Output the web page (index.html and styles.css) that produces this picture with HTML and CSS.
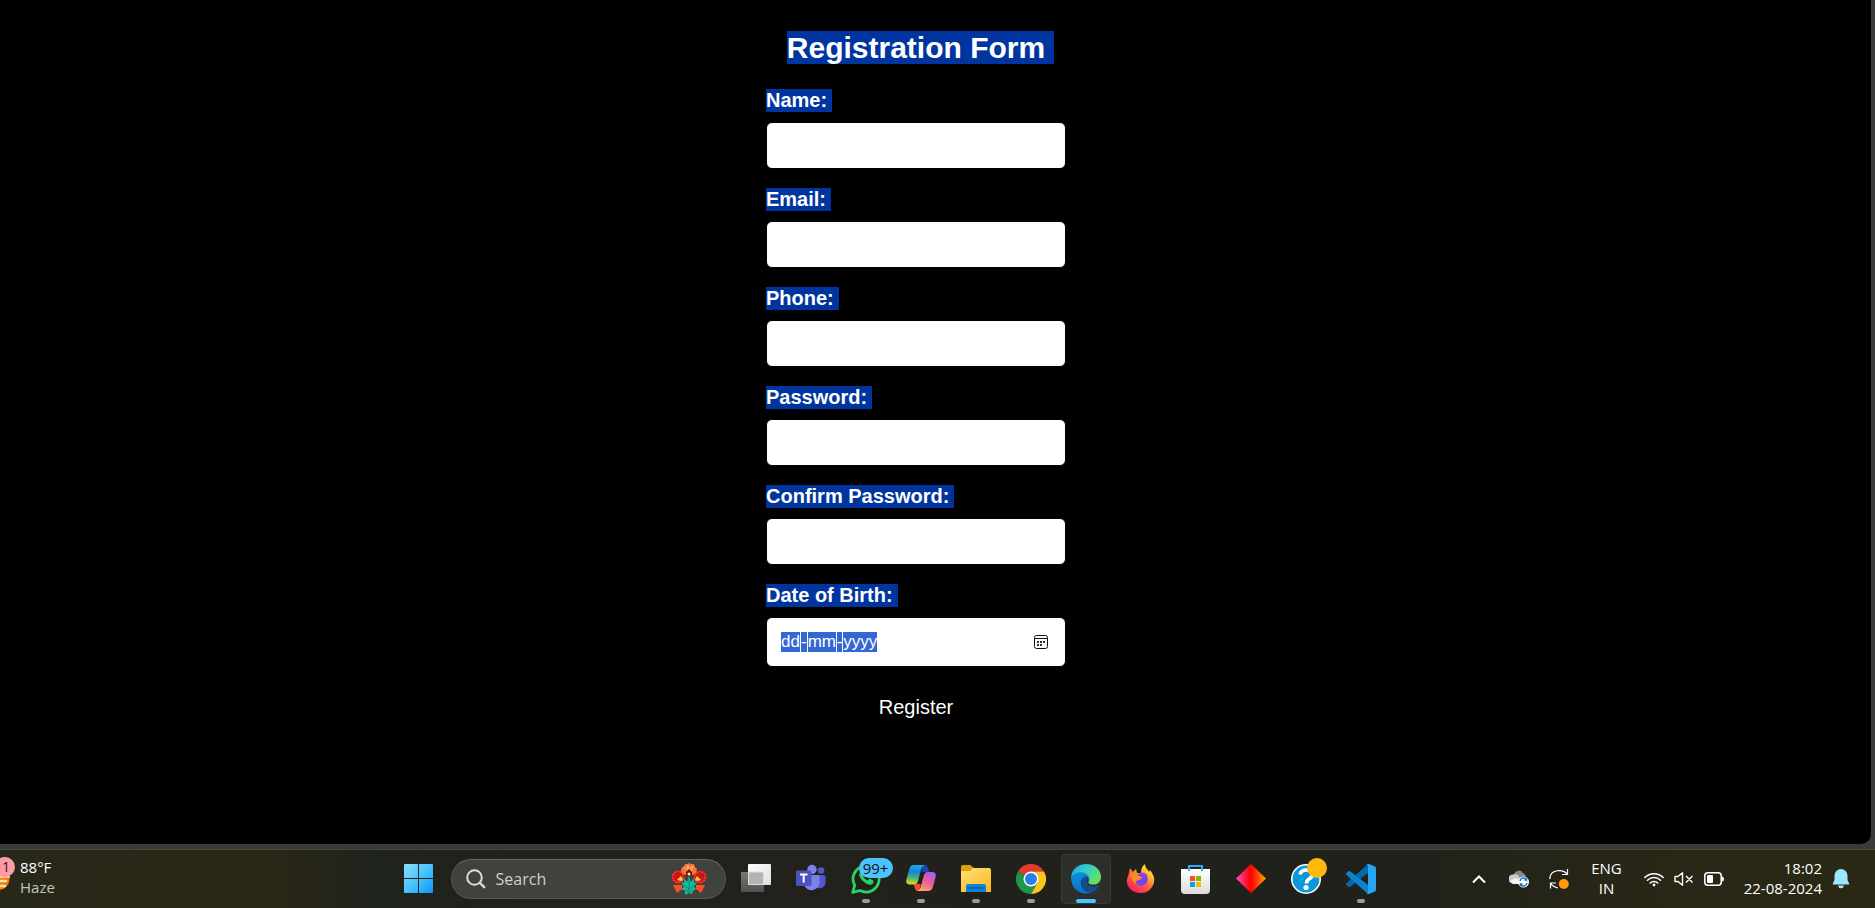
FILE: index.html
```html
<!DOCTYPE html>
<html lang="en">
<head>
<meta charset="utf-8">
<title>Registration Form</title>
<link rel="stylesheet" href="styles.css">
</head>
<body>
<div class="browser">
  <main class="page">
    <form class="form">
      <h1 class="title"><span class="marked">Registration Form</span></h1>
      <div class="field"><label class="label" for="name"><span class="marked">Name:</span></label><input class="box" id="name" type="text"></div>
      <div class="field"><label class="label" for="email"><span class="marked">Email:</span></label><input class="box" id="email" type="email"></div>
      <div class="field"><label class="label" for="phone"><span class="marked">Phone:</span></label><input class="box" id="phone" type="tel"></div>
      <div class="field"><label class="label" for="password"><span class="marked">Password:</span></label><input class="box" id="password" type="password"></div>
      <div class="field"><label class="label" for="confirm"><span class="marked">Confirm Password:</span></label><input class="box" id="confirm" type="password"></div>
      <div class="field">
        <label class="label" for="day"><span class="marked">Date of Birth:</span></label>
        <div class="box date">
          <input class="part day" id="day" type="text" value="dd" aria-label="Day"><span class="dash">-</span><input class="part month" type="text" value="mm" aria-label="Month"><span class="dash">-</span><input class="part year" type="text" value="yyyy" aria-label="Year">
          <button class="picker" type="button" aria-label="Show calendar">
            <svg width="14" height="14" viewBox="0 0 14 14"><rect x=".5" y=".5" width="13" height="13" rx="2" fill="none" stroke="#111"/><path d="M1 3.5h12" stroke="#111"/><path d="M3 6h2v2H3zM6 6h2v2H6zM9 6h2v2H9zM3 9h2v2H3zM6 9h2v2H6z" fill="#333"/></svg>
          </button>
        </div>
      </div>
      <button class="register" type="button">Register</button>
    </form>
  </main>
</div>

<footer class="taskbar">
  <button class="weather" type="button">
    <svg class="weather-icon" width="15" height="36" viewBox="0 0 15 36"><path d="M0 19h9a11 11 0 0 1-9 14z" fill="#f57c0b"/><path d="M0 24h6M0 29h5" stroke="#fbe3a6" stroke-width="2.6" stroke-linecap="round"/><path d="M0 20h10" stroke="#fff0c8" stroke-width="1.4"/><circle cx="5" cy="10" r="10" fill="#ff9ba6"/><text x="2" y="15" class="badge-one">1</text></svg>
    <span class="weather-text"><span>88°F</span><span class="muted">Haze</span></span>
  </button>

  <nav class="apps" aria-label="Taskbar">
    <button class="app start" type="button" aria-label="Start">
      <svg width="30" height="30" viewBox="0 0 30 30"><defs><linearGradient id="win" x1="0" y1="0" x2="30" y2="30" gradientUnits="userSpaceOnUse"><stop stop-color="#8be0ff"/><stop offset=".5" stop-color="#45c2fd"/><stop offset="1" stop-color="#0793fb"/></linearGradient></defs><path d="M1 0h13v14H0V1a1 1 0 0 1 1-1zM15 0h13a1 1 0 0 1 1 1v13H15zM0 15h14v14H1a1 1 0 0 1-1-1zM15 15h14v13a1 1 0 0 1-1 1H15z" fill="url(#win)"/></svg>
    </button>
    <label class="search">
      <svg width="20" height="20" viewBox="0 0 20 20" fill="none" stroke="#dededa" stroke-linecap="round"><circle cx="8.5" cy="8.5" r="7.3" stroke-width="2"/><path d="M14 14l4.2 4.2" stroke-width="2.4"/></svg>
      <input class="search-input" type="text" placeholder="Search" aria-label="Search">
      <svg width="36" height="32" viewBox="0 0 36 32"><g fill="#c9151c"><circle cx="7" cy="14" r="6.500"/><circle cx="29" cy="14" r="6.500"/></g><g fill="none" stroke="#f5412e" stroke-width="1.500" stroke-dasharray="2 1"><circle cx="7" cy="14" r="5.500"/><circle cx="29" cy="14" r="5.500"/></g><path d="M10 8l1-4 2 0 1-3 3 0 1-1 2 1 3 0 1 3 2 2-1 4-3 2h-8l-3-2z" fill="#f37735"/><path d="M13 3l3 4 1-5 1 5 4-4-2 6" stroke="#ffb27a" fill="none"/><path d="M15 9l3-3 3 3v4h-6z" fill="#7d1014"/><circle cx="18" cy="11" r="1.500" fill="#ffe7a0"/><path d="M2 22h9l0 4-5 4zM34 22h-9l0 4 5 4z" fill="#fc4c21"/><path d="M6 17l4-4 2 4-2 1zM30 17l-4-4-2 4 2 1z" fill="#ffd529"/><path d="M18 13l2 6 3-4 0 5 3-1-3 5 2 2-3 2-1 3-3-1-4 2 0-4-4-2 3-2-3-5 3 1 0-5 3 4z" fill="#16b99b"/><path d="M18 16v14M13 22l5 4 5-4M14 27l4 2 4-2" stroke="#0b827a" stroke-width=".8" fill="none"/></svg>
    </label>
    <button class="app" type="button" aria-label="Task view">
      <svg width="30" height="30" viewBox="0 0 30 30"><defs><linearGradient id="tv1" x2="0" y2="1"><stop stop-color="#777"/><stop offset="1" stop-color="#515151"/></linearGradient><linearGradient id="tv2" x2="1" y2="1"><stop stop-color="#fff"/><stop offset="1" stop-color="#dedede"/></linearGradient></defs><rect y="8" width="23" height="20" rx="1" fill="url(#tv1)"/><rect x="7" width="23" height="21" rx="1" fill="url(#tv2)"/><path d="M7.5 8h15v12.500h-15z" fill="#b4b4b4" stroke="#ddd"/></svg>
    </button>
    <button class="app" type="button" aria-label="Teams">
      <svg width="30" height="30" viewBox="0 0 30 30"><circle cx="25" cy="6.500" r="3.300" fill="#5059c9"/><path d="M20 11h7.500A2 2 0 0 1 29.500 13v6a6 6 0 0 1-9 4.500z" fill="#5059c9"/><circle cx="16" cy="5.500" r="4.700" fill="#7b83eb"/><path d="M8 11h14a1.500 1.500 0 0 1 1.500 1.500V19a8 8 0 0 1-15.500 2z" fill="#7b83eb"/><rect y="6.500" width="15.500" height="15.500" rx="1.500" fill="#4b53bc"/><path d="M4 10.500h7.500M7.700 10.500v8" stroke="#fff" stroke-width="2"/></svg>
    </button>
    <button class="app running" type="button" aria-label="WhatsApp, 99+ unread">
      <svg width="30" height="30" viewBox="0 0 30 30"><path d="M1.700 28.300l2-7A13 13 0 1 1 9 26.500z" fill="none" stroke="#25d366" stroke-width="2.800" stroke-linejoin="round"/><path d="M10 7.500c-3 2-2 6 2 9.500 4 4 8 5 10.500 2l-.2-2.500-3.700-2-2 2c-2-.7-3.700-2.500-4.500-4.500l1.600-1.600-1.500-3z" fill="#25d366"/></svg>
      <span class="badge">99+</span>
    </button>
    <button class="app running" type="button" aria-label="Copilot">
      <svg width="30" height="30" viewBox="0 0 30 30"><defs><linearGradient id="cp1" x1=".4" y1="0" x2=".3" y2="1"><stop stop-color="#1ca8f0"/><stop offset=".35" stop-color="#1685dc"/><stop offset=".65" stop-color="#43b878"/><stop offset="1" stop-color="#f4d80b"/></linearGradient><linearGradient id="cp2" x1=".8" y1="0" x2=".3" y2="1"><stop stop-color="#a45cf6"/><stop offset=".5" stop-color="#e95e9a"/><stop offset="1" stop-color="#ffa564"/></linearGradient></defs><path d="M16 1h3q2 0 2.800 2.500L23.500 8h-7z" fill="#1546bd"/><path d="M8 20h7l-2 7H11q-2-1-2.500-4z" fill="#ed4c34"/><path d="M8 1h11q-3 1-4 5l-3 11q-1 3.500-4 3.500H3.500Q-.5 20 .3 16L3.500 4.500Q4.500 1 8 1z" fill="url(#cp1)"/><path d="M22 27H11q3-1 4-5l3-11q1-3 4-3h4.500q4 .5 3.200 4.500l-3 11Q25.500 27 22 27z" fill="url(#cp2)"/></svg>
    </button>
    <button class="app running" type="button" aria-label="File Explorer">
      <svg width="30" height="30" viewBox="0 0 30 30"><defs><linearGradient id="fe" x2=".7" y2="1"><stop stop-color="#ffe27e"/><stop offset="1" stop-color="#fbbb22"/></linearGradient></defs><path d="M0 3a2 2 0 0 1 2-2h7l4 3-2 4H0z" fill="#e0a008"/><path d="M0 7h9l3-3h16a2 2 0 0 1 2 2v22H0z" fill="url(#fe)"/><path d="M5 28v-6a2 2 0 0 1 2-2h16a2 2 0 0 1 2 2v6z" fill="#1180d6"/><path d="M8 24h14" stroke="#08589f" stroke-width="1.500"/></svg>
    </button>
    <button class="app running" type="button" aria-label="Chrome">
      <svg width="30" height="30" viewBox="0 0 30 30"><path d="M15 15L2 7.500A15 15 0 0 1 28 7.500H15z" fill="#e33b2e"/><path d="M15 15l6.500 3.700L15 30A15 15 0 0 1 2 7.500z" fill="#219447"/><path d="M15 7.500h13A15 15 0 0 1 15 30l6.500-11.300z" fill="#fcc41c"/><circle cx="15" cy="15" r="7.500" fill="#fff"/><circle cx="15" cy="15" r="6" fill="#2b7de9"/></svg>
    </button>
    <button class="app running active" type="button" aria-label="Edge">
      <svg width="30" height="30" viewBox="0 0 30 30"><defs><linearGradient id="ed1" x2="1" y2=".5"><stop stop-color="#1ba6df"/><stop offset=".5" stop-color="#35c9d2"/><stop offset="1" stop-color="#65e05c"/></linearGradient><linearGradient id="ed2" x2=".3" y2="1"><stop stop-color="#1190dc"/><stop offset="1" stop-color="#0873cd"/></linearGradient></defs><path d="M0 13C1 5 7 0 15 0c9 0 15 6 15 13 0 5-4 8-8 7.500-5 0-5-2-4-4C18 10 8 7 0 13z" fill="url(#ed1)"/><path d="M0 13C5 6 17 7 19 15c-3-4-9-2-9 4 0 6 6 10 11 9.500C12 32 0 27 0 13z" fill="url(#ed2)"/><path d="M15 12.500c-7 1-7 16 6 16 3-1 6-4 7-6.500.5-1-.5-1-1-.7-6 3-12 0-10.500-4.500.5-1.500 0-3-1.500-4.300z" fill="#124c91"/></svg>
    </button>
    <button class="app" type="button" aria-label="Firefox">
      <svg width="30" height="30" viewBox="0 0 30 30"><defs><linearGradient id="ff" x1="1" x2=".3" y2="1"><stop stop-color="#fff04a"/><stop offset=".35" stop-color="#ffbd30"/><stop offset=".65" stop-color="#ff6038"/><stop offset="1" stop-color="#f4216b"/></linearGradient></defs><path d="M3 9l1-5 3 4 3-3 1 4h4c0-4 1-7 4-9 0 4 3 5 4 8l1-2c3 4 5 8 4 12-1 6-6 11-13 11C5 29 0 22 1 15z" fill="url(#ff)"/><circle cx="15.500" cy="15.500" r="6.200" fill="#7645ec"/><path d="M13 9q7-2 9 4-4-3-7-1z" fill="#a63bd0"/><path d="M4 10l7 1 5 2q-1 3-4 3-3 1-2 4-5-3-6-10z" fill="#ff8a21"/></svg>
    </button>
    <button class="app" type="button" aria-label="Microsoft Store">
      <svg width="30" height="30" viewBox="0 0 30 30"><defs><linearGradient id="ms" x2="0" y2="1"><stop stop-color="#fff"/><stop offset="1" stop-color="#dcdcdc"/></linearGradient></defs><path d="M0 5h29v21a4 4 0 0 1-4 4H4a4 4 0 0 1-4-4z" fill="url(#ms)"/><path d="M8 7V2h13v5" fill="none" stroke="#28aeee" stroke-width="2"/><path d="M9 12h5v5H9z" fill="#f25022"/><path d="M15 12h5v5h-5z" fill="#7fba00"/><path d="M9 18h5v5H9z" fill="#00a4ef"/><path d="M15 18h5v5h-5z" fill="#ffb900"/></svg>
    </button>
    <button class="app" type="button" aria-label="Diamond">
      <svg width="30" height="30" viewBox="0 0 30 30"><defs><linearGradient id="di"><stop stop-color="#fa4fc0"/><stop offset=".48" stop-color="#f00"/><stop offset=".6" stop-color="#ff1c00"/><stop offset="1" stop-color="#ffa900"/></linearGradient></defs><path d="M15 0l15 14.500L15 29 0 14.500z" fill="url(#di)"/></svg>
    </button>
    <button class="app" type="button" aria-label="Get Help">
      <svg width="30" height="30" viewBox="0 0 30 30"><circle cx="15" cy="15" r="14.200" fill="#0a98dc" stroke="#fff" stroke-width="1.600"/><path d="M9 10.500Q10 6 15.500 6c7 0 7.500 6 2.500 9-2 1.300-2.500 2-2.500 4.500" fill="none" stroke="#fff" stroke-width="3.600"/><circle cx="15" cy="23.500" r="2.600" fill="#fff"/></svg>
      <span class="dot"></span>
    </button>
    <button class="app running" type="button" aria-label="Visual Studio Code">
      <svg width="30" height="30" viewBox="0 0 30 30"><path d="M22 0v9L4.500 22.500q-1.500 1-2.500 0l-1.500-1.500q-1-1 0-2z" fill="#0668ac"/><path d="M22 30v-9L4.500 7.500Q3 6.500 2 7.500L.5 9q-1 1 0 2z" fill="#0c83cc"/><path d="M21 0q-.7.700 1 1.500v27Q20.500 29.500 21 30h2l6-2.500q1-.5 1-2v-21q0-1.500-1-2L23 0z" fill="#27a5f3"/></svg>
    </button>
  </nav>

  <div class="tray">
    <button class="tray-button chevron" type="button" aria-label="Show hidden icons"><svg width="14" height="9" viewBox="0 0 14 9"><path d="M1 7.500l6-6 6 6" fill="none" stroke="#fff" stroke-width="2"/></svg></button>
    <button class="tray-button" type="button" aria-label="OneDrive"><svg width="20" height="18" viewBox="0 0 20 18"><path d="M5 4a5 5 0 0 1 9-1 4 4 0 0 1 2 6L10 11z" fill="#888"/><path d="M4 13.500A4.500 4.500 0 0 1 4 4.500c3-1 6 0 7 4v5z" fill="#ccc"/><path d="M1 11l6-3 5 3v3H4z" fill="#f3f3f3"/><circle cx="14.500" cy="12" r="5.500" fill="#fff"/><path d="M11 11a3.600 3.600 0 0 1 6.500-1.500V8M18 13a3.600 3.600 0 0 1-6.500 1.500V16M15.500 10h2.500M13.500 14H11" fill="none" stroke="#1475c6" stroke-width="1.500"/></svg></button>
    <button class="tray-button" type="button" aria-label="Update available"><svg width="20" height="22" viewBox="0 0 20 22"><path d="M.8 11C1 1 14 .5 18.500 6.500M18.500 1v5.500H13M1.500 20.500V15H7M1.500 15Q4 19 9 20" fill="none" stroke="#fff" stroke-width="1.200"/><circle cx="14.800" cy="16" r="5" fill="#ff9b0a"/></svg></button>
    <button class="tray-button language" type="button"><span>ENG</span><span>IN</span></button>
    <button class="tray-button quick" type="button" aria-label="Network, volume and battery">
      <svg width="20" height="15" viewBox="0 0 20 15" fill="none" stroke="#fff" stroke-width="1.500" stroke-linecap="round"><path d="M.8 5.500a13 13 0 0 1 18.400 0M3.500 8.300a9.200 9.200 0 0 1 13 0M6.200 11a5.400 5.400 0 0 1 7.600 0"/><circle cx="10" cy="13" r="1.400" fill="#fff" stroke="none"/></svg>
      <svg width="20" height="14" viewBox="0 0 20 14" fill="none" stroke="#fff" stroke-width="1.400"><path d="M1 4.500h3L8.500.8v12.400L4 9.500H1zM12 4l6.500 6.500M18.500 4L12 10.500" stroke-linejoin="round"/></svg>
      <svg width="20" height="14" viewBox="0 0 20 14"><rect x=".8" y=".8" width="16.400" height="12.400" rx="3" fill="none" stroke="#fff" stroke-width="1.500"/><rect x="3" y="3" width="6" height="8" rx="1" fill="#fff"/><path d="M18 4.500q2 0 2 2.500t-2 2.500z" fill="#fff"/></svg>
    </button>
    <button class="tray-button clock" type="button"><span>18:02</span><span>22-08-2024</span></button>
    <button class="tray-button bell" type="button" aria-label="Notifications"><svg width="18" height="20" viewBox="0 0 18 20"><path d="M9 0a6.500 6.500 0 0 1 6.500 6.500V11l1.700 3.500q.3 1-.7 1h-15q-1 0-.7-1L2.500 11V6.500A6.500 6.500 0 0 1 9 0zM6 16.500h6q-.5 2.700-3 2.700t-3-2.700z" fill="#9be9ff"/></svg></button>
  </div>
</footer>
</body>
</html>
```
FILE: styles.css
```css
* { box-sizing: border-box; }

body {
  margin: 0;
  min-height: 100vh;
  display: flex;
  flex-direction: column;
  background: #3a3a3a;
  color: #fff;
  font-family: "Liberation Sans", Arial, sans-serif;
}

button {
  padding: 0;
  border: 0;
  background: none;
  color: inherit;
  font: inherit;
}

svg { display: block; flex: none; }

.browser {
  flex: 1;
  display: flex;
  padding: 0 4px 5px 0;
}

.page {
  flex: 1;
  display: flex;
  justify-content: center;
  padding: 31px 39px 0 0;
  background: #000;
  border-bottom-right-radius: 10px;
}

.form {
  width: 300px;
  display: flex;
  flex-direction: column;
  gap: 19px;
}

.title {
  margin: 0 0 5px;
  font-size: 30px;
  line-height: 34px;
  text-align: center;
}

.marked { background: #0035a0; }

.title .marked {
  padding-right: 9px;
  margin-right: -9px;
}

.field {
  display: flex;
  flex-direction: column;
  gap: 10px;
}

.label {
  font-size: 20px;
  line-height: 23px;
  font-weight: bold;
}

.label .marked {
  display: inline-block;
  padding-right: 5px;
}

.box {
  width: 100%;
  height: 47px;
  padding: 0 14px;
  border: 1px solid #000;
  border-radius: 6px;
  background: #fff;
  font-family: inherit;
  font-size: 17px;
}

.date {
  height: 50px;
  display: flex;
  align-items: center;
  gap: 1px;
}

.part,
.dash {
  height: 20px;
  padding: 0;
  border: 0;
  background: #3367d1;
  color: #fff;
  font-family: inherit;
  font-size: 17px;
  line-height: 20px;
}

.day { width: 19px; }
.month { width: 28px; }
.year { width: 34px; }

.picker {
  margin-left: auto;
  margin-right: 3px;
}

.register {
  padding: 10px;
  font-size: 20px;
  line-height: 23px;
}

.taskbar {
  flex: none;
  display: grid;
  grid-template-columns: minmax(0, 4fr) auto minmax(0, 5fr);
  align-items: center;
  height: 59px;
  border-top: 1px solid #464639;
  background: linear-gradient(90deg, #282818 0%, #2b2716 14%, #1f231d 20%, #22211b 26%, #21211b 76%, #282716 88%, #2a2815 100%);
  font-family: "Open Sans", "Noto Sans", sans-serif;
  font-size: 15px;
  line-height: 20px;
  overflow: hidden;
}

.weather {
  display: flex;
  align-items: center;
  gap: 5px;
  padding-bottom: 4px;
  text-align: left;
}

.weather-icon { margin-bottom: 4px; }

.weather-text,
.language,
.clock {
  display: flex;
  flex-direction: column;
}

.badge-one {
  font-size: 14px;
  fill: #222;
}

.muted { color: #c4c4bd; }

.apps {
  display: flex;
  align-items: center;
  gap: 5px;
  padding-left: 2px;
}

.app {
  position: relative;
  width: 50px;
  height: 50px;
  display: flex;
  align-items: center;
  justify-content: center;
  border-radius: 5px;
}

.start { margin-right: 2px; }

.running::after {
  content: "";
  position: absolute;
  left: 21px;
  bottom: 1px;
  width: 8px;
  height: 4px;
  border-radius: 2px;
  background: #9b9b98;
}

.active {
  background: #2e2f2a;
  box-shadow: inset 0 0 0 1px #393a35;
}

.active::after {
  left: 15px;
  width: 20px;
  background: #4cc2ff;
}

.badge {
  position: absolute;
  left: 18px;
  top: 4px;
  width: 34px;
  height: 20px;
  border-radius: 10px;
  background: #4cc2ff;
  color: #111;
  text-align: center;
}

.dot {
  position: absolute;
  left: 26px;
  top: 4px;
  width: 20px;
  height: 20px;
  border-radius: 50%;
  background: #ffb90a;
}

.search {
  width: 275px;
  height: 40px;
  display: flex;
  align-items: center;
  gap: 10px;
  padding: 0 18px 0 14px;
  border: 1px solid #53544e;
  border-top-color: #66675f;
  border-radius: 20px;
  background: #41423c;
}

.search-input {
  flex: 1;
  min-width: 0;
  padding: 0;
  border: 0;
  background: none;
  color: #d0d0cb;
  font: inherit;
  font-size: 16px;
}

.search-input::placeholder { color: #d0d0cb; opacity: 1; }

.tray {
  display: flex;
  align-items: center;
  justify-content: flex-end;
  gap: 20px;
  padding-right: 25px;
}

.chevron { margin-right: 3px; }

.language {
  align-items: center;
  margin: 0 2px;
  padding-bottom: 2px;
}

.quick {
  display: flex;
  align-items: center;
  gap: 10px;
}

.clock {
  align-items: flex-end;
  padding-bottom: 2px;
}

.bell { margin-left: -10px; }
```
